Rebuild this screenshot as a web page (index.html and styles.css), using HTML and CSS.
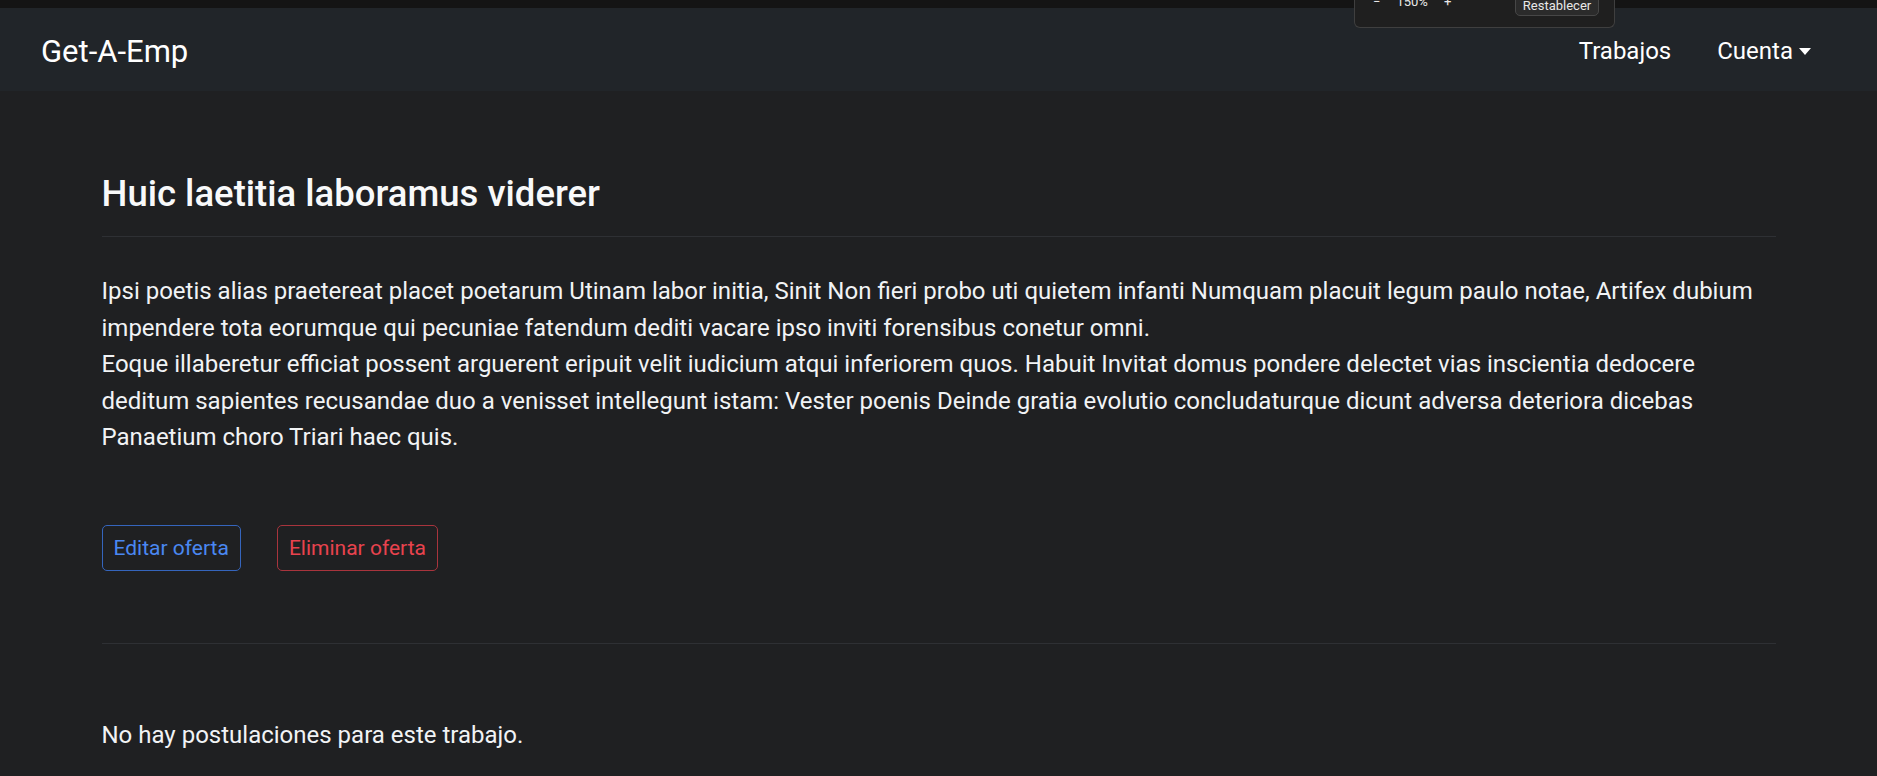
FILE: index.html
```html
<!DOCTYPE html>
<html lang="es">
<head>
<meta charset="utf-8">
<title>Get-A-Emp</title>
<link rel="stylesheet" href="styles.css">
</head>
<body>
<div class="topstrip"></div>
<nav class="navbar">
  <a class="brand" href="#">Get-A-Emp</a>
  <ul class="nav-links">
    <li><a href="#" class="nav-link">Trabajos</a></li>
    <li><a href="#" class="nav-link dropdown-toggle">Cuenta<span class="caret"></span></a></li>
  </ul>
</nav>
<div class="zoom-popup">
  <span class="zp-btn">−</span>
  <span class="zp-val">150%</span>
  <span class="zp-btn">+</span>
  <span class="zp-reset">Restablecer</span>
</div>
<main class="container">
  <h4 class="job-title">Huic laetitia laboramus viderer</h4>
  <hr class="divider">
  <p class="job-desc">Ipsi poetis alias praetereat placet poetarum Utinam labor initia, Sinit Non fieri probo uti quietem infanti Numquam placuit legum paulo notae, Artifex dubium impendere tota eorumque qui pecuniae fatendum dediti vacare ipso inviti forensibus conetur omni.<br>Eoque illaberetur efficiat possent arguerent eripuit velit iudicium atqui inferiorem quos. Habuit Invitat domus pondere delectet vias inscientia dedocere deditum sapientes recusandae duo a venisset intellegunt istam: Vester poenis Deinde gratia evolutio concludaturque dicunt adversa deteriora dicebas Panaetium choro Triari haec quis.</p>
  <div class="actions">
    <a href="#" class="btn btn-blue">Editar oferta</a>
    <a href="#" class="btn btn-red">Eliminar oferta</a>
  </div>
  <hr class="divider divider-2">
  <p class="empty">No hay postulaciones para este trabajo.</p>
</main>
</body>
</html>
```
FILE: styles.css
```css
* { box-sizing: border-box; }
html, body { margin: 0; padding: 0; }
body {
  background: #1f2022;
  color: #f1f3f5;
  font-family: Roboto, "Liberation Sans", sans-serif;
  font-size: 24px;
  line-height: 1.5;
  overflow: hidden;
}
a { text-decoration: none; color: inherit; }

.topstrip { height: 8px; background: #141414; }

.navbar {
  height: 83px;
  background: #212529;
  display: flex;
  align-items: center;
  justify-content: space-between;
  padding: 3px 54px 0 41px;
}
.brand { font-size: 31px; color: #fff; line-height: 1; }
.nav-links {
  list-style: none;
  margin: 0;
  padding: 0;
  display: flex;
  gap: 22px;
}
.nav-link {
  display: flex;
  align-items: center;
  padding: 0 12px;
  color: #fff;
  font-size: 24px;
}
.caret {
  display: inline-block;
  width: 0; height: 0;
  margin-left: 6px;
  border-top: 7px solid #fff;
  border-left: 6px solid transparent;
  border-right: 6px solid transparent;
}

.zoom-popup {
  position: absolute;
  top: 0;
  left: 1354px;
  width: 261px;
  height: 28px;
  background: #1f1f1f;
  border: 1px solid #3f3f3f;
  border-top: none;
  border-radius: 0 0 6px 6px;
  display: flex;
  align-items: flex-start;
  padding-left: 18px;
  font-size: 13px;
  color: #e8e8e8;
  line-height: 16px;
}
.zp-btn, .zp-val { margin-top: -6px; }
.zp-val { margin-left: 16px; margin-right: 16px; }
.zp-reset {
  margin-left: auto;
  margin-right: 15px;
  margin-top: -6px;
  width: 84px;
  height: 22px;
  padding-top: 3px;
  text-align: center;
  background: #2b2b2b;
  border: 1px solid #474747;
  border-radius: 5px;
}

.container {
  width: 1710px;
  margin: 0 auto;
  padding: 81px 18px 0;
}
.job-title {
  margin: 0;
  font-size: 36.5px;
  font-weight: 500;
  line-height: 44px;
  color: #f8f9fa;
}
.divider {
  margin: 20px 0 0;
  border: 0;
  border-top: 1px solid #2e3034;
}
.job-desc {
  margin: 36px 0 0;
  line-height: 36.5px;
}
.actions {
  display: flex;
  gap: 36px;
  margin-top: 69px;
}
.btn {
  display: inline-block;
  font-size: 21px;
  line-height: 32px;
  padding: 6px 11px;
  border: 1px solid;
  border-radius: 5px;
}
.btn-blue { color: #4a88f2; border-color: #3565bd; }
.btn-red { color: #e8434e; border-color: #a8343d; }
.divider-2 { margin-top: 72px; }
.empty { margin: 73px 0 0; line-height: 36px; }
```
